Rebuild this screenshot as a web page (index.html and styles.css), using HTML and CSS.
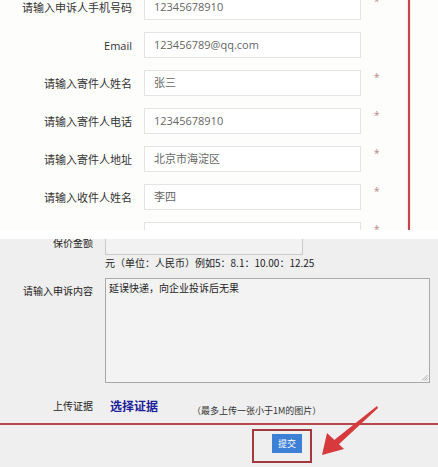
FILE: index.html
```html
<!doctype html>
<html lang="zh-CN">

<head>
    <meta charset="utf-8">
    <title>申诉表单</title>
    <meta name="viewport" content="width=device-width, initial-scale=1">
    <link rel="stylesheet" href="styles.css">
</head>

<body>
    <div class="page">
        <section class="top">
            <div class="top__clip">
                <div class="form">
                    <div class="form__row">
                        <label class="form__label">请输入申诉人手机号码</label>
                        <div class="form__input">12345678910</div>
                        <span class="form__star">*</span>
                    </div>
                    <div class="form__row">
                        <label class="form__label">Email</label>
                        <div class="form__input">123456789@qq.com</div>
                        <span class="form__star"></span>
                    </div>
                    <div class="form__row">
                        <label class="form__label">请输入寄件人姓名</label>
                        <div class="form__input">张三</div>
                        <span class="form__star">*</span>
                    </div>
                    <div class="form__row">
                        <label class="form__label">请输入寄件人电话</label>
                        <div class="form__input">12345678910</div>
                        <span class="form__star">*</span>
                    </div>
                    <div class="form__row">
                        <label class="form__label">请输入寄件人地址</label>
                        <div class="form__input">北京市海淀区</div>
                        <span class="form__star">*</span>
                    </div>
                    <div class="form__row">
                        <label class="form__label">请输入收件人姓名</label>
                        <div class="form__input">李四</div>
                        <span class="form__star">*</span>
                    </div>
                    <div class="form__row">
                        <label class="form__label">请输入收件人电话</label>
                        <div class="form__input"></div>
                        <span class="form__star">*</span>
                    </div>
                </div>
                <div class="mark-vline"></div>
            </div>
        </section>

        <section class="bottom">
            <div class="b-row b-row--money">
                <label class="b-label">保价金额</label>
                <div class="b-input"></div>
            </div>
            <p class="b-hint">元（单位：人民币）例如5：8.1：10.00：12.25</p>
            <div class="b-row b-row--content">
                <label class="b-label">请输入申诉内容</label>
                <div class="b-textarea">延误快递，向企业投诉后无果
                    <svg class="b-grip" width="7" height="7" viewBox="0 0 7 7">
                        <path d="M6.5 1 L1 6.5 M6.5 3.5 L3.5 6.5 M6.5 5.5 L5.5 6.5" stroke="#999" stroke-width="0.8" />
                    </svg>
                </div>
            </div>
            <div class="b-row b-row--upload">
                <label class="b-label">上传证据</label>
                <a class="b-choose" href="javascript:void(0)">选择证据</a>
                <span class="b-note">（最多上传一张小于1M的图片）</span>
            </div>
            <div class="b-footer">
                <button class="b-submit" type="button">提交</button>
            </div>

            <div class="mark-hline"></div>
            <div class="mark-box"></div>
            <svg class="mark-arrow" width="438" height="228" viewBox="0 239 438 228">
                <polygon points="377,406 378,408 337,446 333,441" fill="#d63a3c" />
                <polygon points="322,455 327,433 344,449" fill="#d63a3c" />
            </svg>
        </section>
    </div>
</body>

</html>
```

FILE: styles.css
```css
* {
    padding: 0;
    margin: 0;
    box-sizing: border-box;
}

body {
    width: 438px;
    height: 467px;
    overflow: hidden;
    font-family: "Open Sans", "Noto Sans CJK SC", sans-serif;
    color: #333;
}

.page {
    position: relative;
    width: 438px;
    height: 467px;
}

.top {
    height: 239px;
    background-color: #fff;
}

.top__clip {
    position: relative;
    height: 230px;
    overflow: hidden;
    background-color: #fdfdfb;
}

.form {
    display: flex;
    flex-direction: column;
    gap: 12px;
    margin-top: -6px;
}

.form__row {
    display: grid;
    grid-template-columns: 132px 217px 1fr;
    column-gap: 12px;
    height: 26px;
}

.form__label {
    align-self: center;
    text-align: right;
    font-size: 11px;
    color: #333;
    white-space: nowrap;
}

.form__input {
    height: 26px;
    border: 1px solid #e4e4e2;
    background-color: #fff;
    padding: 0 9px;
    font-size: 11px;
    line-height: 24px;
    color: #666;
}

.form__star {
    padding: 1px 0 0 1px;
    font-size: 10px;
    line-height: 12px;
    color: #b98787;
}

.mark-vline {
    position: absolute;
    top: 0;
    left: 408px;
    width: 2px;
    height: 230px;
    background-color: #c2484c;
    box-shadow: 0 0 2px #f0b4b6;
}

.bottom {
    position: relative;
    height: 228px;
    overflow: hidden;
    background-color: #efefef;
    font-family: "Noto Sans CJK SC", sans-serif;
    font-size: 10px;
    color: #222;
}

.b-row {
    display: flex;
    column-gap: 12px;
}

.b-label {
    width: 93px;
    text-align: right;
    white-space: nowrap;
}

.b-row--money {
    margin-top: -6px;
}

.b-row--money .b-label {
    line-height: 19px;
}

.b-input {
    width: 198px;
    height: 22px;
    border: 1px solid #c9c9c9;
    background-color: #f2f2f2;
}

.b-hint {
    margin: 1px 0 0 105px;
    line-height: 14px;
}

.b-row--content {
    margin-top: 8px;
}

.b-row--content .b-label {
    padding-top: 5px;
}

.b-textarea {
    position: relative;
    width: 325px;
    height: 105px;
    border: 1px solid #a9a9a9;
    background-color: #f3f3f3;
    padding: 2px 3px;
    font-size: 10px;
    line-height: 14px;
}

.b-grip {
    position: absolute;
    right: 1px;
    bottom: 1px;
}

.b-row--upload {
    margin-top: 12px;
    align-items: center;
    height: 20px;
}

.b-choose {
    margin-left: 5px;
    font-size: 12px;
    font-weight: bold;
    color: #20209a;
    text-decoration: none;
}

.b-note {
    margin: 10px 0 0 22px;
    font-size: 9px;
    color: #333;
}

.b-footer {
    padding: 19px 0 0 272px;
}

.b-submit {
    display: block;
    width: 30px;
    height: 19px;
    border: none;
    background-color: #3d80d6;
    color: #fff;
    font-family: "Noto Sans CJK SC", sans-serif;
    font-size: 9px;
}

.mark-hline {
    position: absolute;
    left: 0;
    top: 184px;
    width: 438px;
    height: 2px;
    background-color: #b8464a;
}

.mark-box {
    position: absolute;
    left: 252px;
    top: 190px;
    width: 60px;
    height: 34px;
    border: 2px solid #a4393d;
}

.mark-arrow {
    position: absolute;
    left: 0;
    top: 0;
    pointer-events: none;
}
```
